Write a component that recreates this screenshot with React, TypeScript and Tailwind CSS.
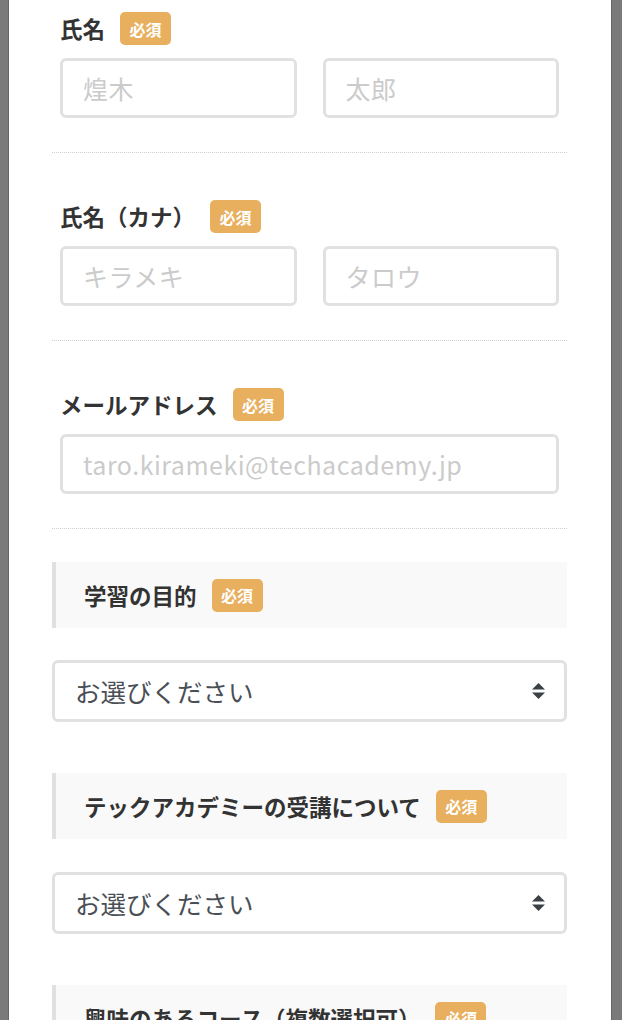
const font = "font-['Noto_Sans_CJK_JP','Noto_Sans',sans-serif]";

function Badge() {
  return (
    <span className="ml-[15px] flex h-[33px] w-[51px] shrink-0 items-center justify-center rounded-[5px] bg-[#e7af5e] text-[16px] font-bold leading-none text-white">
      必須
    </span>
  );
}

function FieldLabel({ children }: { children: React.ReactNode }) {
  return (
    <div className="flex h-[33px] items-center">
      <span className="text-[22.5px] font-bold leading-none text-[#333]">{children}</span>
      <Badge />
    </div>
  );
}

function TextInput({ placeholder }: { placeholder: string }) {
  return (
    <input
      type="text"
      placeholder={placeholder}
      className="h-[60px] w-full min-w-0 rounded-[6px] border-[3px] border-[#e1e1e1] bg-white px-[20px] text-[25px] tracking-[0.5px] text-[#333] outline-none placeholder:text-[#cbcbcb]"
    />
  );
}

function Divider() {
  return <div className="border-t border-dotted border-[#cfcfcf]" />;
}

function SectionHeader({ children }: { children: React.ReactNode }) {
  return (
    <div className="flex h-[66px] items-center border-l-4 border-[#e0e0e0] bg-[#f9f9f9] pl-[28px]">
      <span className="text-[22.5px] font-bold leading-none text-[#333]">{children}</span>
      <Badge />
    </div>
  );
}

function SelectBox() {
  return (
    <div className="relative">
      <select
        defaultValue=""
        className="h-[62px] w-full appearance-none rounded-[6px] border-[3px] border-[#e1e1e1] bg-white pl-[20px] pr-[48px] text-[25.5px] text-[#4a4f56] outline-none"
      >
        <option value="">お選びください</option>
      </select>
      <svg
        className="pointer-events-none absolute right-[22px] top-1/2 -translate-y-1/2"
        width="13"
        height="16"
        viewBox="0 0 13 16"
      >
        <path d="M6.5 0 L13 6.5 L0 6.5 Z" fill="#3b4046" />
        <path d="M0 9.5 L13 9.5 L6.5 16 Z" fill="#3b4046" />
      </svg>
    </div>
  );
}

export default function App() {
  return (
    <div className={`flex min-h-screen bg-[#7a7a7a] pl-[8px] pr-[10px] ${font}`}>
      <div className="flex-1 border-x border-[#666] bg-white pl-[43px] pr-[44px] pt-[12px] pb-[80px]">
        <div className="px-[8px] pb-[34px]">
          <FieldLabel>氏名</FieldLabel>
          <div className="mt-[13px] grid grid-cols-2 gap-[26px]">
            <TextInput placeholder="煌木" />
            <TextInput placeholder="太郎" />
          </div>
        </div>
        <Divider />
        <div className="px-[8px] pt-[47px] pb-[34px]">
          <FieldLabel>氏名（カナ）</FieldLabel>
          <div className="mt-[13px] grid grid-cols-2 gap-[26px]">
            <TextInput placeholder="キラメキ" />
            <TextInput placeholder="タロウ" />
          </div>
        </div>
        <Divider />
        <div className="px-[8px] pt-[47px] pb-[34px]">
          <FieldLabel>メールアドレス</FieldLabel>
          <div className="mt-[13px]">
            <TextInput placeholder="taro.kirameki@techacademy.jp" />
          </div>
        </div>
        <Divider />
        <div className="flex flex-col pt-[33px]">
          <SectionHeader>学習の目的</SectionHeader>
          <div className="mt-[32px]">
            <SelectBox />
          </div>
          <div className="mt-[51px]">
            <SectionHeader>テックアカデミーの受講について</SectionHeader>
          </div>
          <div className="mt-[33px]">
            <SelectBox />
          </div>
          <div className="mt-[51px]">
            <SectionHeader>興味のあるコース（複数選択可）</SectionHeader>
          </div>
        </div>
      </div>
    </div>
  );
}
